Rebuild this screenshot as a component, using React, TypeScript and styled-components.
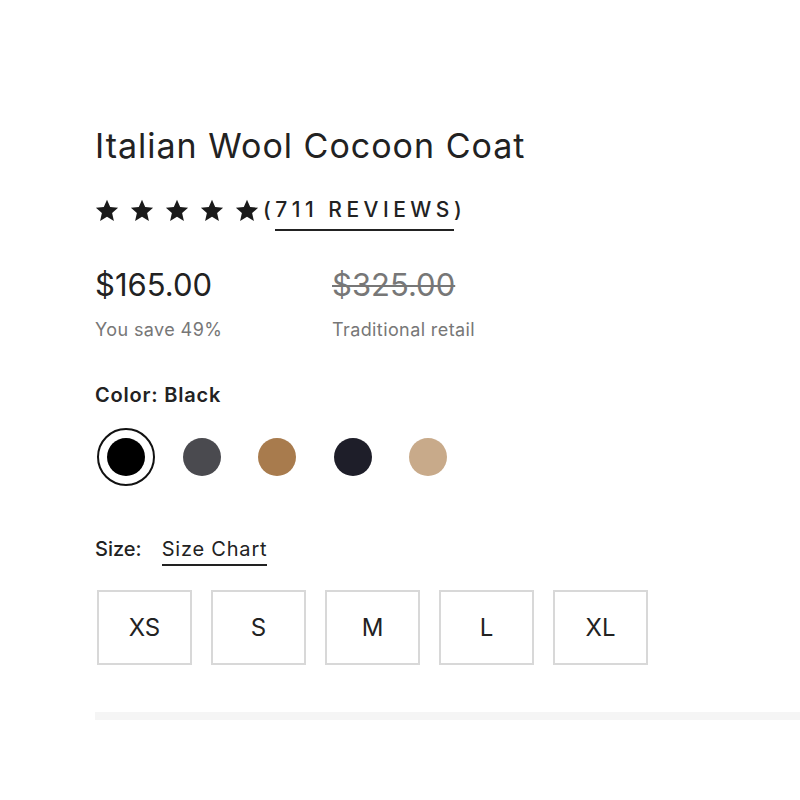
import React from "react";
import styled, { createGlobalStyle } from "styled-components";

const Global = createGlobalStyle`
  html, body { margin: 0; padding: 0; background: #fff; }
  body { font-family: Inter, "Liberation Sans", Arial, sans-serif; color: #222; }
`;

const Page = styled.div`
  padding: 123px 0 0 95px;
  width: 705px;
`;

const Title = styled.h1`
  margin: 0;
  font-size: 34px;
  line-height: 46px;
  font-weight: 400;
  color: #222;
  letter-spacing: 1px;
`;

const Rating = styled.div`
  display: flex;
  align-items: center;
  margin-top: 26px;
  height: 30px;
`;

const Stars = styled.div`
  display: flex;
  gap: 11px;
  margin-right: 4px;
`;

const Reviews = styled.a`
  font-size: 21px;
  font-weight: 500;
  letter-spacing: 4.5px;
  color: #222;
  text-decoration: none;
`;

const ReviewCount = styled.span`
  display: inline-block;
  border-bottom: 2px solid #222;
  padding-bottom: 7px;
  margin-bottom: -7px;
  line-height: 24px;
`;

const Prices = styled.div`
  display: grid;
  grid-template-columns: 237px auto;
  margin-top: 40px;
`;

const PriceCol = styled.div`
  display: flex;
  flex-direction: column;
  gap: 13px;
`;

const Price = styled.span<{ $struck?: boolean }>`
  font-size: 31px;
  line-height: 40px;
  color: ${(p) => (p.$struck ? "#777" : "#222")};
  text-decoration: ${(p) => (p.$struck ? "line-through" : "none")};
  text-decoration-thickness: 2px;
`;

const Note = styled.span`
  font-size: 18px;
  line-height: 24px;
  color: #777;
  letter-spacing: 0.4px;
`;

const Label = styled.div`
  margin-top: 41px;
  font-size: 20px;
  line-height: 24px;
  font-weight: 600;
  letter-spacing: 0.8px;
  color: #222;
`;

const Swatches = styled.div`
  display: flex;
  gap: 17.5px;
  margin-top: 21px;
  margin-left: 2px;
`;

const SwatchRing = styled.button<{ $selected?: boolean }>`
  width: 58px;
  height: 58px;
  border-radius: 50%;
  padding: 0;
  background: #fff;
  border: 2px solid ${(p) => (p.$selected ? "#111" : "transparent")};
  display: flex;
  align-items: center;
  justify-content: center;
  cursor: pointer;
`;

const Dot = styled.span<{ $color: string }>`
  width: 38px;
  height: 38px;
  border-radius: 50%;
  background: ${(p) => p.$color};
`;

const SizeHeader = styled.div`
  display: flex;
  align-items: baseline;
  gap: 20px;
  margin-top: 51px;
  font-size: 20px;
  line-height: 24px;
`;

const SizeLabel = styled.span`
  font-weight: 500;
`;

const SizeChart = styled.a`
  color: #222;
  text-decoration: none;
  letter-spacing: 0.8px;
  border-bottom: 2px solid #222;
  padding-bottom: 3px;
`;

const SizeRow = styled.div`
  display: flex;
  gap: 19px;
  margin-top: 24px;
  margin-left: 2px;
`;

const SizeBox = styled.button`
  width: 95px;
  height: 75px;
  box-sizing: border-box;
  border: 2px solid #d8d8d8;
  background: #fff;
  font-family: inherit;
  font-size: 24px;
  color: #222;
  cursor: pointer;
`;

const Divider = styled.div`
  margin-top: 47px;
  height: 8px;
  background: #f5f5f5;
`;

const Star = () => (
  <svg width="24" height="23" viewBox="0 0 24 23" aria-hidden="true">
    <path
      d="M12 0.8l3.2 7.3 7.9 0.7-6 5.3 1.8 7.8L12 17.8l-6.9 4.1 1.8-7.8-6-5.3 7.9-0.7z"
      fill="#1a1a1a"
    />
  </svg>
);

const colors = ["#000000", "#4a4a4f", "#a87b4d", "#1e1e29", "#c8aa8a"];
const sizes = ["XS", "S", "M", "L", "XL"];

export default function App() {
  return (
    <>
      <Global />
      <Page>
        <Title>Italian Wool Cocoon Coat</Title>
        <Rating>
          <Stars>
            {[0, 1, 2, 3, 4].map((i) => (
              <Star key={i} />
            ))}
          </Stars>
          <Reviews href="#">
            (<ReviewCount>711 REVIEWS</ReviewCount>)
          </Reviews>
        </Rating>
        <Prices>
          <PriceCol>
            <Price>$165.00</Price>
            <Note>You save 49%</Note>
          </PriceCol>
          <PriceCol>
            <Price $struck>$325.00</Price>
            <Note>Traditional retail</Note>
          </PriceCol>
        </Prices>
        <Label>Color: Black</Label>
        <Swatches>
          {colors.map((c, i) => (
            <SwatchRing key={c} $selected={i === 0}>
              <Dot $color={c} />
            </SwatchRing>
          ))}
        </Swatches>
        <SizeHeader>
          <SizeLabel>Size:</SizeLabel>
          <SizeChart href="#">Size Chart</SizeChart>
        </SizeHeader>
        <SizeRow>
          {sizes.map((s) => (
            <SizeBox key={s}>{s}</SizeBox>
          ))}
        </SizeRow>
        <Divider />
      </Page>
    </>
  );
}
